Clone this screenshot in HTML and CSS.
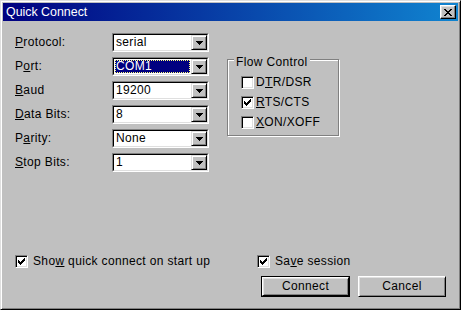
FILE: index.html
```html
<!DOCTYPE html>
<html>
<head>
<meta charset="utf-8">
<link rel="stylesheet" href="styles.css">
</head>
<body>
<div class="window">
  <div class="titlebar">
    <span class="title">Quick Connect</span>
    <span class="close">
      <svg width="8" height="7" viewBox="0 0 8 7" shape-rendering="crispEdges">
        <rect x="0" y="0" width="2" height="1"/><rect x="6" y="0" width="2" height="1"/>
        <rect x="1" y="1" width="2" height="1"/><rect x="5" y="1" width="2" height="1"/>
        <rect x="2" y="2" width="4" height="1"/>
        <rect x="3" y="3" width="2" height="1"/>
        <rect x="2" y="4" width="4" height="1"/>
        <rect x="1" y="5" width="2" height="1"/><rect x="5" y="5" width="2" height="1"/>
        <rect x="0" y="6" width="2" height="1"/><rect x="6" y="6" width="2" height="1"/>
      </svg>
    </span>
  </div>
  <div class="body">
    <div class="top">
      <div class="form">
        <span class="label"><u>P</u>rotocol:</span>
        <div class="combo"><div class="combo-in"><span class="value">serial</span><span class="drop"><svg width="7" height="4" viewBox="0 0 7 4" shape-rendering="crispEdges"><rect x="0" y="0" width="7" height="1"/><rect x="1" y="1" width="5" height="1"/><rect x="2" y="2" width="3" height="1"/><rect x="3" y="3" width="1" height="1"/></svg></span></div></div>

        <span class="label">P<u>o</u>rt:</span>
        <div class="combo"><div class="combo-in"><span class="value selected">COM1</span><span class="drop"><svg width="7" height="4" viewBox="0 0 7 4" shape-rendering="crispEdges"><rect x="0" y="0" width="7" height="1"/><rect x="1" y="1" width="5" height="1"/><rect x="2" y="2" width="3" height="1"/><rect x="3" y="3" width="1" height="1"/></svg></span></div></div>

        <span class="label"><u>B</u>aud</span>
        <div class="combo"><div class="combo-in"><span class="value">19200</span><span class="drop"><svg width="7" height="4" viewBox="0 0 7 4" shape-rendering="crispEdges"><rect x="0" y="0" width="7" height="1"/><rect x="1" y="1" width="5" height="1"/><rect x="2" y="2" width="3" height="1"/><rect x="3" y="3" width="1" height="1"/></svg></span></div></div>

        <span class="label"><u>D</u>ata Bits:</span>
        <div class="combo"><div class="combo-in"><span class="value">8</span><span class="drop"><svg width="7" height="4" viewBox="0 0 7 4" shape-rendering="crispEdges"><rect x="0" y="0" width="7" height="1"/><rect x="1" y="1" width="5" height="1"/><rect x="2" y="2" width="3" height="1"/><rect x="3" y="3" width="1" height="1"/></svg></span></div></div>

        <span class="label">P<u>a</u>rity:</span>
        <div class="combo"><div class="combo-in"><span class="value">None</span><span class="drop"><svg width="7" height="4" viewBox="0 0 7 4" shape-rendering="crispEdges"><rect x="0" y="0" width="7" height="1"/><rect x="1" y="1" width="5" height="1"/><rect x="2" y="2" width="3" height="1"/><rect x="3" y="3" width="1" height="1"/></svg></span></div></div>

        <span class="label"><u>S</u>top Bits:</span>
        <div class="combo"><div class="combo-in"><span class="value">1</span><span class="drop"><svg width="7" height="4" viewBox="0 0 7 4" shape-rendering="crispEdges"><rect x="0" y="0" width="7" height="1"/><rect x="1" y="1" width="5" height="1"/><rect x="2" y="2" width="3" height="1"/><rect x="3" y="3" width="1" height="1"/></svg></span></div></div>
      </div>

      <div class="group">
        <span class="group-title">Flow Control</span>
        <div class="group-list">
          <div class="check"><span class="box"></span><span class="check-label">D<u>T</u>R/DSR</span></div>
          <div class="check"><span class="box"><svg width="7" height="7" viewBox="0 0 7 7" shape-rendering="crispEdges"><rect x="6" y="0" width="1" height="1"/><rect x="5" y="1" width="2" height="1"/><rect x="0" y="2" width="1" height="1"/><rect x="4" y="2" width="3" height="1"/><rect x="0" y="3" width="2" height="1"/><rect x="3" y="3" width="3" height="1"/><rect x="0" y="4" width="5" height="1"/><rect x="1" y="5" width="3" height="1"/><rect x="2" y="6" width="1" height="1"/></svg></span><span class="check-label"><u>R</u>TS/CTS</span></div>
          <div class="check"><span class="box"></span><span class="check-label"><u>X</u>ON/XOFF</span></div>
        </div>
      </div>
    </div>

    <div class="bottom-checks">
      <div class="check wide"><span class="box"><svg width="7" height="7" viewBox="0 0 7 7" shape-rendering="crispEdges"><rect x="6" y="0" width="1" height="1"/><rect x="5" y="1" width="2" height="1"/><rect x="0" y="2" width="1" height="1"/><rect x="4" y="2" width="3" height="1"/><rect x="0" y="3" width="2" height="1"/><rect x="3" y="3" width="3" height="1"/><rect x="0" y="4" width="5" height="1"/><rect x="1" y="5" width="3" height="1"/><rect x="2" y="6" width="1" height="1"/></svg></span><span class="check-label">Sho<u>w</u> quick connect on start up</span></div>
      <div class="check loose"><span class="box"><svg width="7" height="7" viewBox="0 0 7 7" shape-rendering="crispEdges"><rect x="6" y="0" width="1" height="1"/><rect x="5" y="1" width="2" height="1"/><rect x="0" y="2" width="1" height="1"/><rect x="4" y="2" width="3" height="1"/><rect x="0" y="3" width="2" height="1"/><rect x="3" y="3" width="3" height="1"/><rect x="0" y="4" width="5" height="1"/><rect x="1" y="5" width="3" height="1"/><rect x="2" y="6" width="1" height="1"/></svg></span><span class="check-label">Sa<u>v</u>e session</span></div>
    </div>

    <div class="buttons">
      <div class="button default"><div class="button-in">Connect</div></div>
      <div class="button"><div class="button-in">Cancel</div></div>
    </div>
  </div>
</div>
</body>
</html>
```

FILE: styles.css
```css
* { box-sizing: border-box; }
html, body { margin: 0; padding: 0; background: #c0c0c0; }
body {
  font-family: "Liberation Sans", Arial, sans-serif;
  font-size: 12px;
  letter-spacing: 0.35px;
  color: #000;
}
u { text-decoration: underline; text-underline-offset: 1px; }

.window {
  width: 461px;
  height: 310px;
  display: flex;
  flex-direction: column;
  background: #c0c0c0;
  border: 1px solid;
  border-color: #dfdfdf #000 #000 #dfdfdf;
  box-shadow: inset 1px 1px 0 #fff, inset -1px -1px 0 #808080;
  padding: 2px;
}

.titlebar {
  height: 18px;
  flex: none;
  display: flex;
  align-items: center;
  justify-content: space-between;
  background: linear-gradient(to right, #000080, #1084d0);
  padding: 0 2px 0 3px;
}
.title {
  color: #fff;
  font-size: 12.4px;
  letter-spacing: 0;
  line-height: 18px;
}
.close {
  width: 16px;
  height: 14px;
  display: flex;
  align-items: center;
  justify-content: center;
  background: #c0c0c0;
  border: 1px solid;
  border-color: #fff #000 #000 #fff;
  box-shadow: inset -1px -1px 0 #808080, inset 1px 1px 0 #dfdfdf;
  padding-right: 1px;
}
.close svg { fill: #000; display: block; }

.body {
  flex: 1;
  display: flex;
  flex-direction: column;
  padding: 12px 12px 10px 12px;
}

.top { display: flex; align-items: flex-start; }

.form {
  display: grid;
  grid-template-columns: 97px 97px;
  grid-auto-rows: 19px;
  row-gap: 5px;
  align-items: center;
}
.label { line-height: 14px; padding-bottom: 2px; }

.combo {
  height: 19px;
  border: 1px solid;
  border-color: #808080 #fff #fff #808080;
}
.combo-in {
  height: 100%;
  border: 1px solid;
  border-color: #000 #dfdfdf #dfdfdf #000;
  background: #fff;
  display: flex;
  align-items: stretch;
}
.value {
  flex: 1;
  padding-left: 2px;
  line-height: 15px;
  white-space: nowrap;
}
.value.selected {
  margin: 1px 1px 1px 1px;
  padding-left: 1px;
  line-height: 13px;
  background: #000080;
  color: #fff;
  outline: 1px dotted #ffff80;
  outline-offset: -1px;
}
.drop {
  width: 16px;
  flex: none;
  display: flex;
  align-items: center;
  justify-content: center;
  background: #c0c0c0;
  border: 1px solid;
  border-color: #dfdfdf #000 #000 #dfdfdf;
  box-shadow: inset 1px 1px 0 #fff, inset -1px -1px 0 #808080;
}
.drop svg { fill: #000; display: block; }

.group {
  width: 112px;
  height: 77px;
  margin: 26px 0 0 18px;
  border: 1px solid #808080;
  box-shadow: 1px 1px 0 #fff, inset 1px 1px 0 #fff;
}
.group-title {
  display: block;
  width: fit-content;
  margin: -5px 0 0 6px;
  padding: 0 2px;
  line-height: 14px;
  background: #c0c0c0;
}
.group-list {
  display: flex;
  flex-direction: column;
  gap: 7px;
  margin-top: 7px;
  padding-left: 13px;
}

.check {
  display: flex;
  align-items: center;
  gap: 2px;
  height: 13px;
}
.check.wide { width: 242px; gap: 5px; }
.check.loose { gap: 5px; }
.check-label { line-height: 13px; padding-bottom: 1px; white-space: nowrap; }
.box {
  width: 13px;
  height: 13px;
  flex: none;
  border: 1px solid;
  border-color: #808080 #fff #fff #808080;
  box-shadow: inset 1px 1px 0 #000, inset -1px -1px 0 #dfdfdf;
  background: #fff;
  display: flex;
  padding: 2px 0 0 2px;
}
.box svg { fill: #000; display: block; }

.bottom-checks {
  margin-top: auto;
  display: flex;
  margin-bottom: 8px;
}

.buttons {
  display: flex;
  justify-content: flex-end;
  gap: 8px;
}
.button {
  width: 88px;
  height: 21px;
  border: 1px solid;
  border-color: #fff #000 #000 #fff;
  box-shadow: inset 1px 1px 0 #dfdfdf, inset -1px -1px 0 #808080;
  display: flex;
  align-items: center;
  justify-content: center;
  line-height: 14px;
}
.button.default {
  width: 89px;
  border: 1px solid #000;
  box-shadow: none;
}
.button.default .button-in {
  width: 100%;
  height: 100%;
  border: 1px solid;
  border-color: #fff #000 #000 #fff;
  box-shadow: inset 1px 1px 0 #dfdfdf, inset -1px -1px 0 #808080;
  display: flex;
  align-items: center;
  justify-content: center;
  padding-bottom: 1px;
}
.button-in { padding-bottom: 1px; }
```
